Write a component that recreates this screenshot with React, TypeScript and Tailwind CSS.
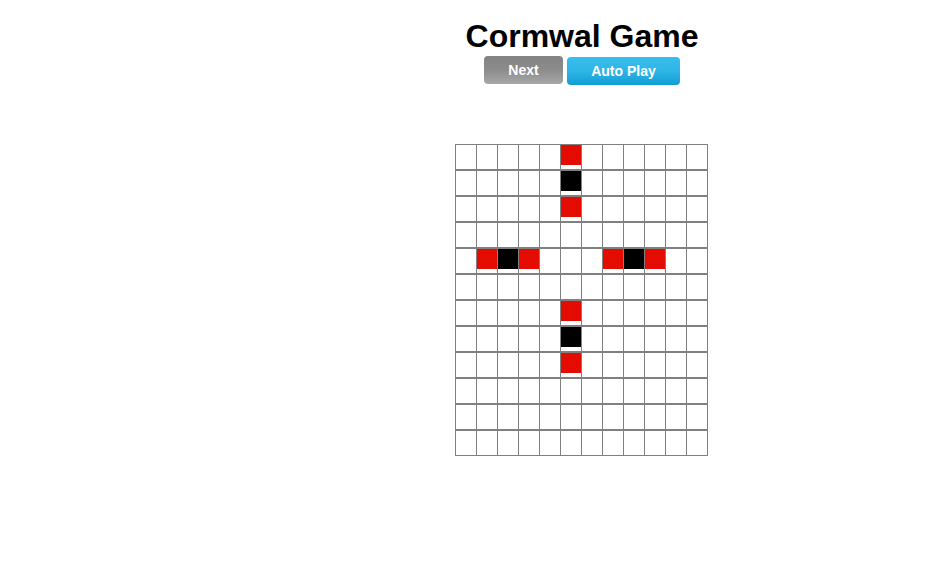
import React from "react";

const SIZE = 12;

// cells that hold a piece: "r" = red, "b" = black
const pieces: Record<string, "r" | "b"> = {
  "0-5": "r",
  "1-5": "b",
  "2-5": "r",
  "4-1": "r",
  "4-2": "b",
  "4-3": "r",
  "4-7": "r",
  "4-8": "b",
  "4-9": "r",
  "6-5": "r",
  "7-5": "b",
  "8-5": "r",
};

function Cell({ piece }: { piece?: "r" | "b" }) {
  return (
    <div className="w-[21px] h-[24px] border-l border-[#808080]">
      {piece && (
        <div className={`w-[20px] h-[20px] ${piece === "r" ? "bg-[#e40c00]" : "bg-black"}`} />
      )}
    </div>
  );
}

export default function App() {
  const rows = Array.from({ length: SIZE }, (_, r) => r);
  const cols = Array.from({ length: SIZE }, (_, c) => c);

  return (
    <div className="w-[932px] h-[574px] bg-white flex font-['Liberation_Sans',Arial,sans-serif]">
      <div className="w-[232px] shrink-0" />
      <div className="flex-1 flex flex-col items-center">
        <h1 className="pt-[18px] text-[32px] leading-[37px] font-bold text-black">Cormwal Game</h1>
        <div className="flex items-start gap-[4px] mt-[1px]">
          <button className="w-[79px] h-[28px] rounded-[4px] bg-gradient-to-b from-[#838383] via-[#8c8c8c] to-[#a8a8a8] text-white text-[14px] font-bold leading-[28px] pb-[2px]">
            Next
          </button>
          <button className="w-[113px] h-[28px] mt-[1px] rounded-[4px] bg-gradient-to-b from-[#38bdec] via-[#2eb5e6] to-[#0f9dd4] text-white text-[14px] font-bold leading-[28px]">
            Auto Play
          </button>
        </div>
        <div className="mt-[59px] mr-[1px]">
          {rows.map((r) => (
            <div key={r} className="flex border-t border-b border-r border-[#808080]">
              {cols.map((c) => (
                <Cell key={c} piece={pieces[`${r}-${c}`]} />
              ))}
            </div>
          ))}
        </div>
      </div>
    </div>
  );
}
